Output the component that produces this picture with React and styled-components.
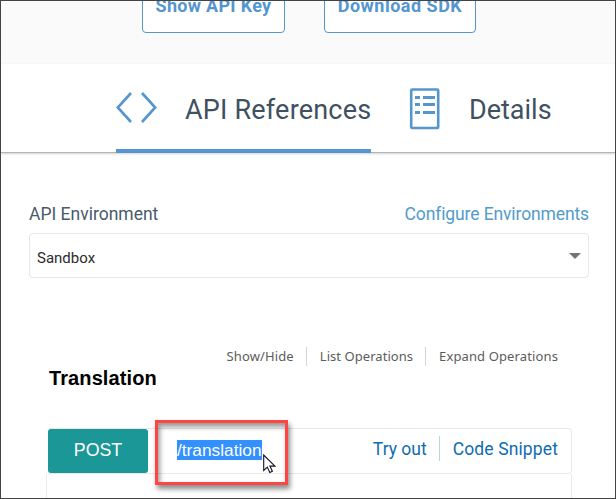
import React from 'react';
import styled, { createGlobalStyle } from 'styled-components';

const Global = createGlobalStyle`
  * { box-sizing: border-box; }
  body { margin: 0; background: #fff; }
`;

const Frame = styled.div`
  width: 616px;
  height: 499px;
  border: 1px solid #444;
  overflow: hidden;
  background: #fff;
  font-family: Roboto, 'Noto Sans', sans-serif;
  white-space: nowrap;
`;

const Hero = styled.header`
  display: flex;
  gap: 39px;
  height: 63px;
  padding-left: 141px;
  background: #fafafa;
`;

const HeroButton = styled.button`
  width: ${(p) => p.$width}px;
  height: 48px;
  margin-top: -16px;
  padding: 0 0 7px;
  border: 1px solid #5496cd;
  border-radius: 4px;
  background: #fff;
  color: #5496cd;
  font: 700 18px/24px Roboto, sans-serif;
  letter-spacing: ${(p) => p.$tracking}px;
`;

const Tabs = styled.nav`
  display: flex;
  gap: 38px;
  height: 89px;
  padding-left: 115px;
  border-bottom: 1px solid #b4b4b4;
  box-shadow: 0 1px 2px rgba(0, 0, 0, 0.18);
`;

const Tab = styled.div`
  display: flex;
  align-items: center;
  width: ${(p) => p.$width}px;
  height: 89px;
  border-bottom: 4px solid ${(p) => (p.$active ? '#5496cd' : 'transparent')};
  color: #3f5161;
  font-size: 27px;
  line-height: 32px;
  letter-spacing: ${(p) => p.$tracking}px;
  padding-top: 6px;
  gap: ${(p) => p.$gap}px;
`;

const TabIcon = styled.svg`
  flex: none;
  margin-bottom: ${(p) => p.$lift}px;
`;

const Environment = styled.section`
  padding: 49px 26px 0 28px;
`;

const EnvironmentHead = styled.div`
  display: flex;
  justify-content: space-between;
  height: 31px;
  font-size: 17.5px;
  line-height: 24px;
  color: #4a5a69;
`;

const EnvironmentLink = styled.a`
  color: #539bcb;
  letter-spacing: -0.12px;
`;

const Select = styled.div`
  display: flex;
  align-items: center;
  justify-content: space-between;
  height: 45px;
  padding: 4px 7px 0;
  border: 1px solid #e7e7e7;
  border-radius: 4px;
  color: #2c2c2c;
  font-size: 15px;
`;

const Caret = styled.svg`
  margin-bottom: 4px;
`;

const Resource = styled.section`
  display: flex;
  justify-content: space-between;
  padding: 69px 57px 0 48px;
  height: 150px;
`;

const ResourceTitle = styled.h2`
  margin: 18px 0 0;
  color: #000;
  font: 700 20px/26px 'Liberation Sans', Arial, sans-serif;
  letter-spacing: 0.1px;
`;

const Options = styled.div`
  display: flex;
  height: 19px;
  color: #5c5c5c;
  font: 13px/19px 'Noto Sans', sans-serif;
`;

const Option = styled.span`
  letter-spacing: ${(p) => p.$tracking || 0}px;
  & + & {
    margin-left: 12px;
    padding-left: 13px;
    border-left: 1px solid #d5d5d5;
  }
`;

const Operation = styled.div`
  display: flex;
  align-items: flex-start;
  width: 525px;
  height: 46px;
  margin-left: 46px;
  padding-left: 1px;
  border: 1px solid #e8e8e8;
  border-left: none;
  border-radius: 4px;
`;

const Method = styled.span`
  width: 100px;
  height: 44px;
  border-radius: 3px;
  background: #1c9797;
  color: #fff;
  text-align: center;
  font: 17.8px/43px 'Liberation Sans', Arial, sans-serif;
`;

const Path = styled.span`
  position: relative;
  margin: 11px 0 0 29px;
  width: 85px;
  height: 20px;
  background: #3390ff;
  color: #fff;
  font: 17.3px/20px 'Liberation Sans', Arial, sans-serif;
`;

const Highlight = styled.span`
  position: absolute;
  left: -22px;
  top: -20px;
  width: 133px;
  height: 65px;
  border: 3px solid #f44;
  box-shadow: 2px 4px 5px rgba(0, 0, 0, 0.45), inset 2px 4px 5px rgba(0, 0, 0, 0.4);
`;

const Pointer = styled.svg`
  position: absolute;
  left: 86px;
  top: 14px;
`;

const Actions = styled.div`
  display: flex;
  margin: 7px 13px 0 auto;
  height: 25px;
  color: #0e6cb0;
  font-size: 17.5px;
  line-height: 26px;
`;

const Action = styled.a`
  letter-spacing: ${(p) => p.$tracking || 0}px;
  & + & {
    margin-left: 12px;
    padding-left: 13px;
    border-left: 1px solid #b5dccb;
  }
`;

const OperationBody = styled.div`
  width: 526px;
  height: 30px;
  margin-left: 45px;
  border: 1px solid #e8e8e8;
  border-width: 0 1px;
`;

export default function App() {
  return (
    <Frame>
      <Global />
      <Hero>
        <HeroButton $width={143} $tracking={0.3}>Show API Key</HeroButton>
        <HeroButton $width={152} $tracking={0.5}>Download SDK</HeroButton>
      </Hero>
      <Tabs>
        <Tab $active $width={255} $gap={27} $tracking={0.2}>
          <TabIcon $lift={3} width="42" height="32" viewBox="0 0 42 32" fill="none" stroke="#5496cd" strokeWidth="2.6">
            <path d="M15 1 1.8 15.5 15 30M26 1l13.2 14.5L26 30" />
          </TabIcon>
          API References
        </Tab>
        <Tab $width={145} $gap={29} $tracking={0}>
          <TabIcon $lift={1} width="31" height="42" viewBox="0 0 31 42" fill="none" stroke="#5496cd">
            <rect x="2.2" y="1.5" width="27" height="38.5" rx="1" strokeWidth="2.6" />
            <path d="M6 9.5h5M14 9.5h12M6 16.5h5M14 16.5h12M6 24.5h5M14 24.5h12" strokeWidth="3" />
          </TabIcon>
          Details
        </Tab>
      </Tabs>
      <Environment>
        <EnvironmentHead>
          <span>API Environment</span>
          <EnvironmentLink>Configure Environments</EnvironmentLink>
        </EnvironmentHead>
        <Select>
          Sandbox
          <Caret width="12" height="6" viewBox="0 0 12 6">
            <path d="M0 0h12L6 6z" fill="#757575" />
          </Caret>
        </Select>
      </Environment>
      <Resource>
        <ResourceTitle>Translation</ResourceTitle>
        <Options>
          <Option $tracking={0.12}>Show/Hide</Option>
          <Option $tracking={0.05}>List Operations</Option>
          <Option $tracking={0.12}>Expand Operations</Option>
        </Options>
      </Resource>
      <Operation>
        <Method>POST</Method>
        <Path>
          /translation
          <Highlight />
          <Pointer width="13" height="20" viewBox="0 0 13 20">
            <path d="M.7 1v15.5l3.6-3.4 2.5 5.4 2.6-1.2-2.5-5.2h5z" fill="#fff" stroke="#111122" strokeWidth="1.1" />
          </Pointer>
        </Path>
        <Actions>
          <Action>Try out</Action>
          <Action $tracking={0.12}>Code Snippet</Action>
        </Actions>
      </Operation>
      <OperationBody />
    </Frame>
  );
}
